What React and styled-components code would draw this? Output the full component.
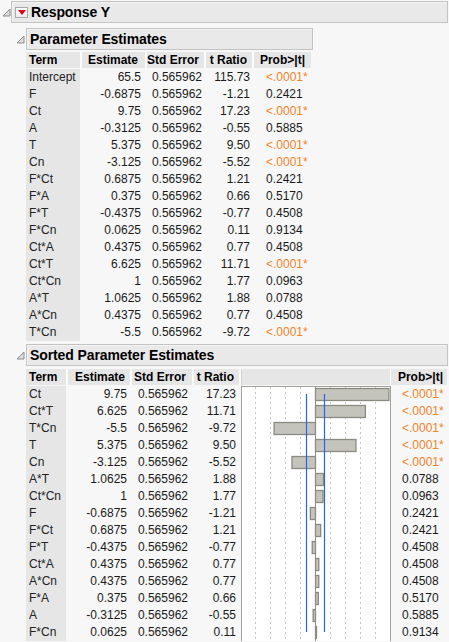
import styled, { createGlobalStyle } from "styled-components";

const GlobalStyle = createGlobalStyle`
  html, body {
    margin: 0;
    padding: 0;
    background: #f7f7f7;
    font-family: "Liberation Sans", Arial, sans-serif;
    color: #1a1a1a;
  }
  #root {
    width: 449px;
    height: 642px;
    overflow: hidden;
  }
`;

const ORANGE = "#f0832a";

const estimates = [
  ["Intercept", "65.5", "115.73", "<.0001*"],
  ["F", "-0.6875", "-1.21", "0.2421"],
  ["Ct", "9.75", "17.23", "<.0001*"],
  ["A", "-0.3125", "-0.55", "0.5885"],
  ["T", "5.375", "9.50", "<.0001*"],
  ["Cn", "-3.125", "-5.52", "<.0001*"],
  ["F*Ct", "0.6875", "1.21", "0.2421"],
  ["F*A", "0.375", "0.66", "0.5170"],
  ["F*T", "-0.4375", "-0.77", "0.4508"],
  ["F*Cn", "0.0625", "0.11", "0.9134"],
  ["Ct*A", "0.4375", "0.77", "0.4508"],
  ["Ct*T", "6.625", "11.71", "<.0001*"],
  ["Ct*Cn", "1", "1.77", "0.0963"],
  ["A*T", "1.0625", "1.88", "0.0788"],
  ["A*Cn", "0.4375", "0.77", "0.4508"],
  ["T*Cn", "-5.5", "-9.72", "<.0001*"],
];

const sortedOrder = [
  "Ct", "Ct*T", "T*Cn", "T", "Cn", "A*T", "Ct*Cn", "F",
  "F*Ct", "F*T", "Ct*A", "A*Cn", "F*A", "A", "F*Cn",
];
const sorted = sortedOrder.map((t) => estimates.find((r) => r[0] === t));

const STD_ERR = "0.565962";

// layout of the two tables: widths and text padding per column
const table1 = {
  cols: "56px 65px 59px 48px 57px",
  pad: [3, 6, 4, 4, 12],
  headPad: [3, 7, 5, 5, 6],
};
const table2 = {
  cols: "42px 64px 62px 47px 150px 56px",
  pad: [3, 5, 6, 5, 0, 11],
  headPad: [3, 5, 6, 5, 0, 4],
};

const Disclosure = () => (
  <svg width="9" height="9" viewBox="0 0 9 9">
    <polygon points="8,1 8,8 1,8" fill="#dcdcdc" stroke="#8c8c8c" strokeWidth="1" strokeLinejoin="miter" />
  </svg>
);

const RedMenu = () => (
  <MenuButton>
    <svg width="8" height="5" viewBox="0 0 8 5">
      <polygon points="0,0 8,0 4,5" fill="#e0001a" />
    </svg>
  </MenuButton>
);

const Chart = ({ rows }) => {
  const zero = 74.5;
  const scale = 4.26;
  const grid = [14.5, 29.5, 44.5, 59.5, 89.5, 104.5, 119.5, 134.5];
  return (
    <ChartCell>
      <svg width="150" height="255" viewBox="0 0 150 255">
        <rect x="0" y="0" width="150" height="255" fill="#ffffff" />
        {grid.map((x) => (
          <line key={x} x1={x} x2={x} y1="1" y2="255" stroke="#c4c4c4" strokeDasharray="2,3" />
        ))}
        {rows.map((r, i) => {
          const t = parseFloat(r[2]);
          const w = t * scale;
          const x = w >= 0 ? zero : zero + w;
          return (
            <rect
              key={r[0]}
              x={x}
              y={i * 17 + 2.5}
              width={Math.max(Math.abs(w), 1)}
              height="12"
              fill="#c5c4bc"
              stroke="#8b8a80"
              strokeWidth="1.3"
            />
          );
        })}
        <line x1={zero} x2={zero} y1="0" y2="255" stroke="#8e8d86" strokeWidth="1" />
        <line x1="65.5" x2="65.5" y1="8" y2="246" stroke="#2563f0" strokeWidth="1.2" />
        <line x1="83.5" x2="83.5" y1="8" y2="246" stroke="#2563f0" strokeWidth="1.2" />
        <line x1="0" x2="150" y1="0.5" y2="0.5" stroke="#a3a29a" />
        <line x1="0.5" x2="0.5" y1="0" y2="255" stroke="#a3a29a" />
        <line x1="149.5" x2="149.5" y1="0" y2="255" stroke="#a3a29a" />
      </svg>
    </ChartCell>
  );
};

const EstimatesTable = ({ layout, rows, withChart }) => {
  const heads = withChart
    ? ["Term", "Estimate", "Std Error", "t Ratio", "", "Prob>|t|"]
    : ["Term", "Estimate", "Std Error", "t Ratio", "Prob>|t|"];
  const probIdx = heads.length - 1;
  return (
    <Grid $cols={layout.cols}>
      {heads.map((h, i) => (
        <HeadCell
          key={i}
          $right={i > 0 && i < probIdx}
          $pad={layout.headPad[i]}
          $chart={withChart && i === 4}
          $last={i === probIdx}
        >
          {h}
        </HeadCell>
      ))}
      {rows.map((r, ri) => {
        const sig = r[3].startsWith("<");
        return [
          <TermCell key={r[0] + "t"} $pad={layout.pad[0]}>{r[0]}</TermCell>,
          <Cell key={r[0] + "e"} $pad={layout.pad[1]}>{r[1]}</Cell>,
          <Cell key={r[0] + "s"} $pad={layout.pad[2]}>{STD_ERR}</Cell>,
          <Cell key={r[0] + "r"} $pad={layout.pad[3]}>{r[2]}</Cell>,
          withChart && ri === 0 ? <Chart key="chart" rows={rows} /> : null,
          <ProbCell key={r[0] + "p"} $pad={layout.pad[probIdx]} $sig={sig}>
            {r[3]}
          </ProbCell>,
        ];
      })}
    </Grid>
  );
};

const App = () => (
  <Page>
    <GlobalStyle />
    <OutlineHead $gutter={11} $tri={2}>
      <Gutter $w={11} $tri={2}>
        <Disclosure />
      </Gutter>
      <HeadBox $grow>
        <RedMenu />
        <Title>Response Y</Title>
      </HeadBox>
    </OutlineHead>

    <Section>
      <OutlineHead>
        <Gutter $w={26} $tri={16}>
          <Disclosure />
        </Gutter>
        <HeadBox $width={287}>
          <Title $pl={3}>Parameter Estimates</Title>
        </HeadBox>
      </OutlineHead>
      <TableWrap $gap={2}>
        <EstimatesTable layout={table1} rows={estimates} />
      </TableWrap>
    </Section>

    <Section $top={3}>
      <OutlineHead>
        <Gutter $w={26} $tri={16}>
          <Disclosure />
        </Gutter>
        <HeadBox $grow>
          <Title $pl={3}>Sorted Parameter Estimates</Title>
        </HeadBox>
      </OutlineHead>
      <TableWrap $gap={3}>
        <EstimatesTable layout={table2} rows={sorted} withChart />
      </TableWrap>
    </Section>
  </Page>
);

const Page = styled.div`
  width: 449px;
  height: 642px;
  padding-top: 1px;
  box-sizing: border-box;
  overflow: hidden;
`;

const Section = styled.div`
  margin-top: ${(p) => p.$top ?? 5}px;
`;

const OutlineHead = styled.div`
  display: flex;
  align-items: stretch;
  height: 22px;
  padding-right: 1px;
`;

const Gutter = styled.div`
  width: ${(p) => p.$w}px;
  flex: none;
  box-sizing: border-box;
  padding-left: ${(p) => p.$tri}px;
  padding-top: 7px;
  svg {
    display: block;
  }
`;

const HeadBox = styled.div`
  box-sizing: border-box;
  ${(p) => (p.$grow ? "flex: 1;" : `width: ${p.$width}px;`)}
  height: 22px;
  display: flex;
  align-items: center;
  background: #e9e9e9;
  border: 1px solid #c3c3c3;
  box-shadow: inset 1px 1px 0 #f4f4f4;
`;

const MenuButton = styled.div`
  width: 13px;
  height: 11px;
  margin-left: 3px;
  box-sizing: border-box;
  border: 1px solid #a8a8a8;
  background: linear-gradient(#ffffff, #ececec);
  display: flex;
  align-items: center;
  justify-content: center;
`;

const Title = styled.div`
  font-weight: bold;
  font-size: 14px;
  color: #000;
  padding-left: ${(p) => p.$pl ?? 3}px;
  letter-spacing: -0.1px;
  white-space: nowrap;
`;

const TableWrap = styled.div`
  padding-left: 26px;
  margin-top: ${(p) => p.$gap}px;
`;

const Grid = styled.div`
  display: grid;
  grid-template-columns: ${(p) => p.$cols};
  grid-auto-rows: 17px;
  font-size: 12px;
  line-height: 17px;
`;

const HeadCell = styled.div`
  box-sizing: border-box;
  background: #e6e6e6;
  background-clip: padding-box;
  border-right: ${(p) => (p.$last ? 0 : p.$chart ? 1 : 2)}px solid #fbfbfb;
  border-bottom: 1px solid #f7f7f7;
  font-weight: bold;
  color: #000;
  white-space: nowrap;
  text-align: ${(p) => (p.$right || p.$last ? "right" : "left")};
  padding-left: ${(p) => (p.$right || p.$last ? 0 : p.$pad)}px;
  padding-right: ${(p) => (p.$right || p.$last ? p.$pad : 0)}px;
  line-height: 16px;
  ${(p) => p.$chart && "border-left: 1px solid #d0d0d0;"}
`;

const TermCell = styled.div`
  box-sizing: border-box;
  background: #e6e6e6;
  background-clip: padding-box;
  border-right: 2px solid transparent;
  padding-left: ${(p) => p.$pad}px;
  color: #222;
  white-space: nowrap;
`;

const Cell = styled.div`
  text-align: right;
  padding-right: ${(p) => p.$pad}px;
  white-space: nowrap;
  color: #1a1a1a;
`;

const ProbCell = styled.div`
  padding-left: ${(p) => p.$pad}px;
  white-space: nowrap;
  color: ${(p) => (p.$sig ? ORANGE : "#1a1a1a")};
`;

const ChartCell = styled.div`
  grid-column: 5;
  grid-row: 2 / span 15;
  svg {
    display: block;
  }
`;

export default App;
